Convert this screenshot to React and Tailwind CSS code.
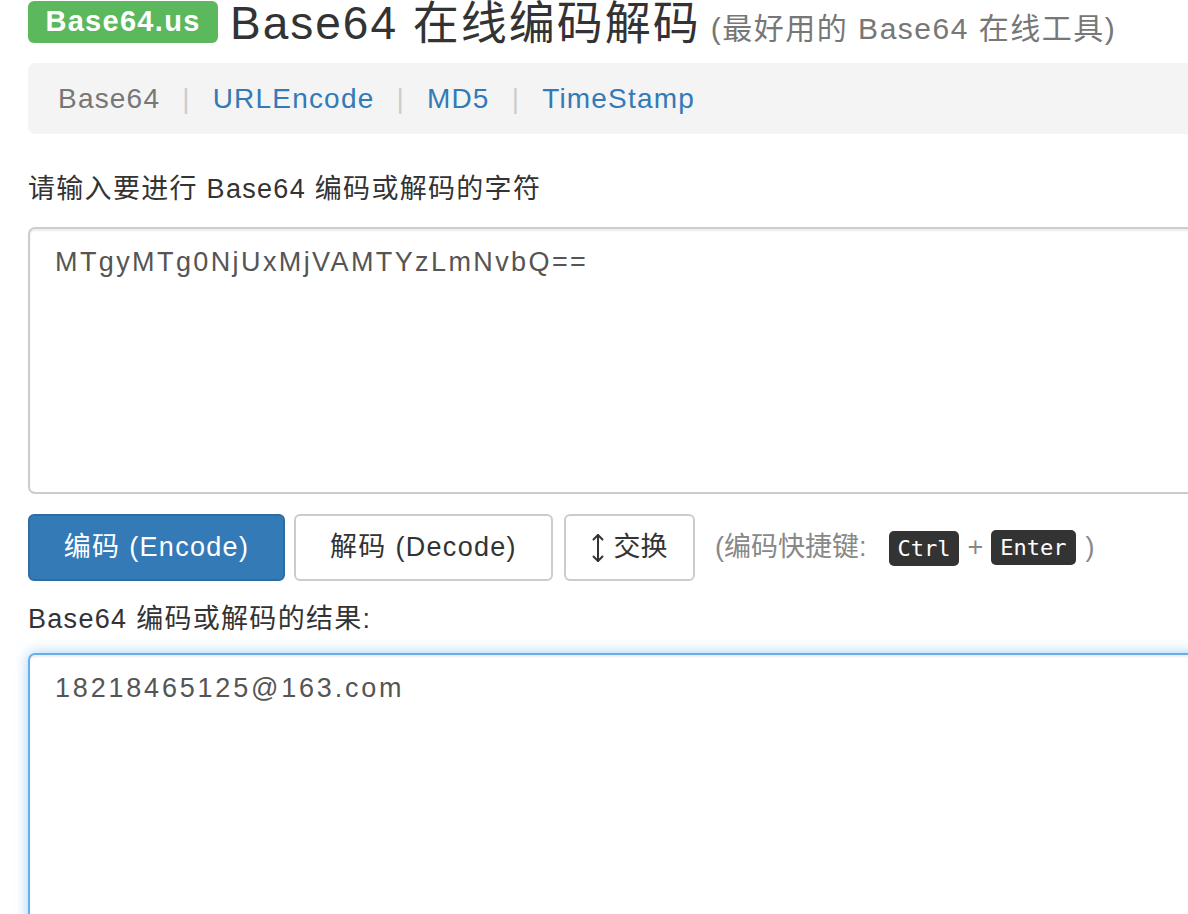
import React, { useState } from 'react';

const sans = { fontFamily: '"Liberation Sans", "Noto Sans CJK SC", sans-serif' };

function SwapIcon() {
  return (
    <svg width="12" height="30" viewBox="0 0 12 30" fill="none" stroke="#333" strokeWidth="2" strokeLinecap="round" strokeLinejoin="round">
      <path d="M6 2v26" />
      <path d="M1.5 6.5L6 2l4.5 4.5" />
      <path d="M1.5 23.5L6 28l4.5-4.5" />
    </svg>
  );
}

function Kbd({ children }) {
  return (
    <kbd className="inline-flex h-[35px] items-center rounded-[5px] bg-[#333] px-[9px] font-['DejaVu_Sans_Mono',monospace] text-[22px] text-white">
      {children}
    </kbd>
  );
}

export default function App() {
  const [input, setInput] = useState('MTgyMTg0NjUxMjVAMTYzLmNvbQ==');
  const [output, setOutput] = useState('18218465125@163.com');

  return (
    <div className="h-[914px] w-full overflow-hidden bg-white text-[#333]" style={sans}>
      <div className="w-[1400px] pl-[28px]">
        <div className="flex h-[44px] items-start">
          <span className="mt-[1px] flex h-[42px] w-[190px] items-center justify-center rounded-[6px] bg-[#5cb85c] text-[29px] font-bold tracking-[1.3px] text-white">
            Base64.us
          </span>
          <h1 className="ml-[12px] mt-[2px] whitespace-nowrap text-[46px] leading-[42px] tracking-[2px] text-[#333]">
            Base64 在线编码解码
            <small className="ml-[10px] text-[30px] tracking-[1.5px] text-[#777]">(最好用的 Base64 在线工具)</small>
          </h1>
        </div>

        <nav className="mt-[19px] flex h-[71px] items-center rounded-l-[7px] bg-[#f4f4f4] pl-[30px] text-[28px] tracking-[1.2px]">
          <span className="text-[#777]">Base64</span>
          <span className="mx-[22px] text-[#ccc]">|</span>
          <a className="text-[#337ab7]">URLEncode</a>
          <span className="mx-[22px] text-[#ccc]">|</span>
          <a className="text-[#337ab7]">MD5</a>
          <span className="mx-[22px] text-[#ccc]">|</span>
          <a className="text-[#337ab7]">TimeStamp</a>
        </nav>

        <p className="mt-[37px] text-[27px] leading-[36px] tracking-[1.3px]">请输入要进行 Base64 编码或解码的字符</p>
        <textarea
          value={input}
          onChange={(e) => setInput(e.target.value)}
          className="mt-[20px] block h-[267px] w-full resize-none rounded-l-[7px] border-2 border-[#ccc] px-[25px] py-[15px] text-[27px] leading-[36px] tracking-[2.4px] text-[#555] shadow-[inset_0_2px_2px_rgba(0,0,0,0.075)] outline-none"
        />

        <div className="mt-[20px] flex items-center">
          <button className="h-[67px] w-[257px] rounded-[6px] border-2 border-[#2e6da4] bg-[#337ab7] text-[27px] tracking-[1.3px] text-white">
            编码 (Encode)
          </button>
          <button className="ml-[9px] h-[67px] w-[259px] rounded-[6px] border-2 border-[#ccc] bg-white text-[27px] tracking-[1.3px] text-[#333]">
            解码 (Decode)
          </button>
          <button className="ml-[11px] flex h-[67px] w-[131px] items-center justify-center gap-[10px] rounded-[6px] border-2 border-[#ccc] bg-white text-[27px] text-[#333]">
            <SwapIcon />
            交换
          </button>
          <span className="ml-[20px] flex items-center text-[27px] text-[#888]">
            (编码快捷键:
            <span className="ml-[22px]"><Kbd>Ctrl</Kbd></span>
            <span className="mx-[8px]">+</span>
            <Kbd>Enter</Kbd>
            <span className="ml-[10px]">)</span>
          </span>
        </div>

        <p className="mt-[20px] text-[27px] leading-[36px] tracking-[1.3px]">Base64 编码或解码的结果:</p>
        <textarea
          value={output}
          onChange={(e) => setOutput(e.target.value)}
          className="mt-[16px] block h-[300px] w-full resize-none rounded-l-[7px] border-2 border-[#66afe9] px-[25px] py-[15px] text-[27px] leading-[36px] tracking-[2.8px] text-[#555] shadow-[inset_0_2px_2px_rgba(0,0,0,0.075),0_0_14px_rgba(102,175,233,0.6)] outline-none"
        />
      </div>
    </div>
  );
}
